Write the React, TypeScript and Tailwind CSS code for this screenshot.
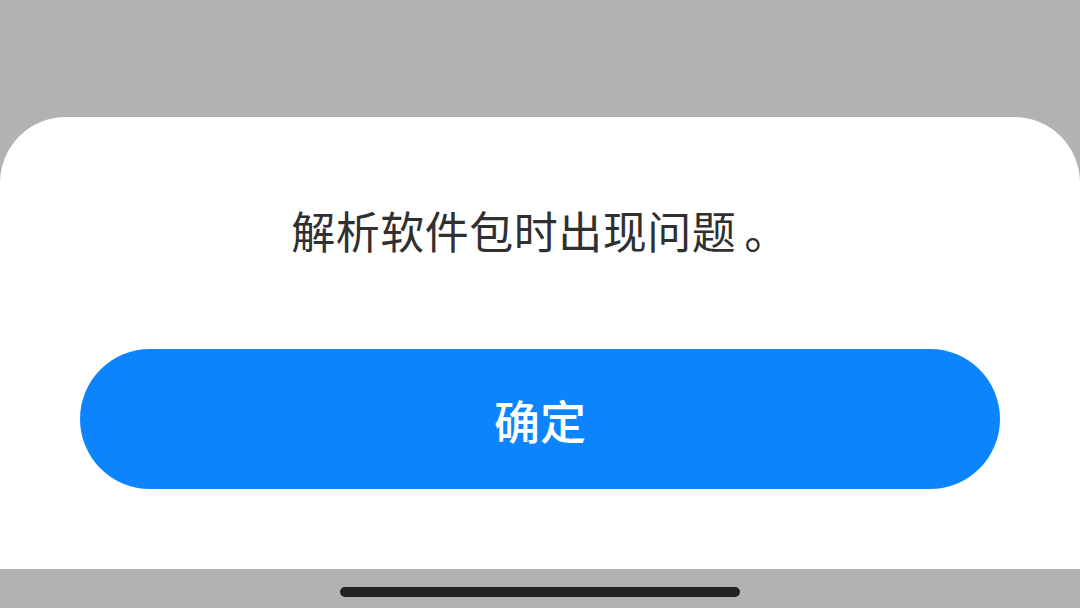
export default function App() {
  return (
    <div
      className="flex h-[608px] w-[1080px] flex-col overflow-hidden bg-[#b3b1b4]"
      style={{ fontFamily: '"Noto Sans CJK SC", "Noto Sans", sans-serif' }}
    >
      <div className="h-[117px] shrink-0" />

      {/* bottom sheet */}
      <div className="flex h-[452px] shrink-0 flex-col items-center rounded-t-[66px] bg-white px-[80px] pt-[83px]">
        <p className="h-[60px] text-[44px] leading-[60px] tracking-[0.5px] text-[#303030]">
          解析软件包时出现问题<span className="ml-[8px]">。</span>
        </p>
        <button className="mt-[89px] flex h-[140px] w-full items-center justify-center rounded-full bg-[#0c84fe] text-[46px] font-medium text-white">
          确定
        </button>
      </div>

      {/* nav bar */}
      <div className="flex flex-1 items-start justify-center pt-[18px]">
        <div className="h-[10px] w-[400px] rounded-full bg-[#222421]" />
      </div>
    </div>
  );
}
